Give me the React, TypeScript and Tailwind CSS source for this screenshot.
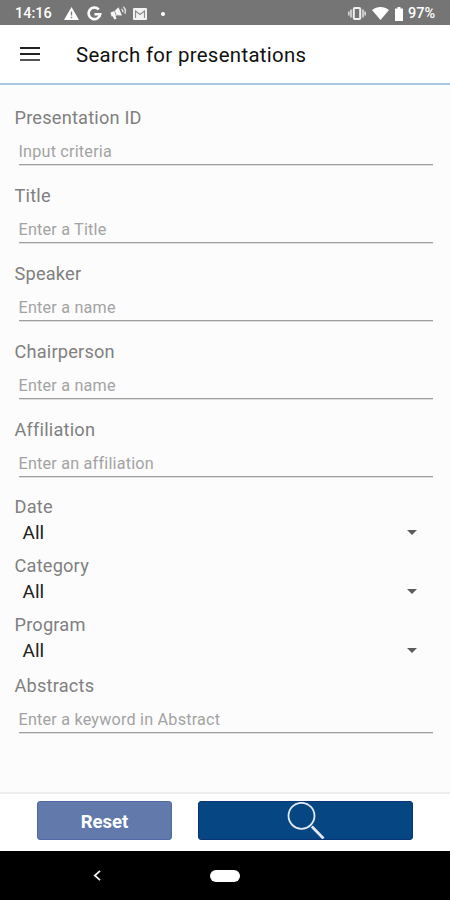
import { FC, useState } from 'react'

interface TextFieldProps {
  label: string
  placeholder: string
}

interface SelectFieldProps {
  label: string
  value: string
}

const textFields: TextFieldProps[] = [
  { label: 'Presentation ID', placeholder: 'Input criteria' },
  { label: 'Title', placeholder: 'Enter a Title' },
  { label: 'Speaker', placeholder: 'Enter a name' },
  { label: 'Chairperson', placeholder: 'Enter a name' },
  { label: 'Affiliation', placeholder: 'Enter an affiliation' },
]

const selectFields: SelectFieldProps[] = [
  { label: 'Date', value: 'All' },
  { label: 'Category', value: 'All' },
  { label: 'Program', value: 'All' },
]

const StatusBar: FC = () => (
  <div className="flex h-[25px] shrink-0 items-center bg-[#757575] pt-[2px] pr-[14px] pl-[15px] text-[14.5px] font-medium text-white">
    <span className="w-[49px]">14:16</span>
    <svg className="h-[13px] w-[15px]" viewBox="0 0 15 13">
      <path d="M7.5 0 15 13H0z" fill="#fff" />
      <path d="M7.5 4.5v4M7.5 9.7v1.5" stroke="#858585" strokeWidth="1.4" />
    </svg>
    <svg className="ml-2 h-[15px] w-[15px]" viewBox="0 0 15 15" fill="none" stroke="#fff" strokeWidth="2.6">
      <path d="M11.8 3.5A5.8 5.8 0 1 0 13.2 8.2H7.5" />
    </svg>
    <svg className="ml-2 h-[15px] w-[17px]" viewBox="0 0 17 15">
      <path d="M.5 6.5 4.5 5 8.5 1.2 12 9.5 7 9.2 5.5 9.8l1 3-2.2.8-1.6-3.3-1.2.2z" fill="#f5f5f5" />
      <path d="M11.5 3c1 .7 1.5 2 1.2 3.2M13.3.8c1.9 1.7 2.6 4.4 1.5 7" fill="none" stroke="#ddd" strokeWidth="1.5" />
      <path d="M4.7 5.2 6 9" stroke="#858585" strokeWidth=".8" />
    </svg>
    <svg className="ml-[6px] h-[12px] w-[14px]" viewBox="0 0 14 12">
      <rect width="14" height="12" rx="1.2" fill="#f3f3f3" />
      <path d="M2.5 10V3L7 6.5 11.5 3v7" fill="none" stroke="#8d8d8d" strokeWidth="1.2" />
    </svg>
    <span className="ml-[14px] h-1 w-1 rounded-full bg-white" />
    <div className="flex-1" />
    <svg className="h-[13px] w-[18px]" viewBox="0 0 18 13">
      <path d="M.8 4.5v4M3 2.5v8M17.2 4.5v4M15 2.5v8" stroke="#d8d8d8" strokeWidth="1.7" />
      <rect x="5.8" y="1" width="6.4" height="11" rx="1" fill="#757575" stroke="#f0f0f0" strokeWidth="2" />
    </svg>
    <svg className="ml-[6px] h-[13px] w-[17px]" viewBox="0 0 17 13">
      <path d="M0 3C5-1 12-1 17 3L8.5 13z" fill="#fff" />
    </svg>
    <svg className="ml-[6px] h-[14px] w-[8px]" viewBox="0 0 8 14">
      <path d="M2.5 0h3v1.5H8V14H0V1.5h2.5z" fill="#fff" />
    </svg>
    <span className="ml-[5px] w-[28px] whitespace-nowrap text-[14.5px]">97%</span>
  </div>
)

const TextField: FC<TextFieldProps> = ({ label, placeholder }) => (
  <label className="block">
    <span className="block h-6 pt-px text-[18.2px] leading-6 tracking-[0.2px] text-[#808080]">{label}</span>
    <span className="block pr-[2px] pl-1">
      <input
        className="block h-9 w-full border-b border-[#a0a0a0] bg-transparent pt-[10px] text-[16.2px] tracking-[0.2px] shadow-[0_1px_0_#dedede] outline-none placeholder:text-[#a3a3a3]"
        placeholder={placeholder}
      />
    </span>
  </label>
)

const SelectField: FC<SelectFieldProps> = ({ label, value }) => (
  <div className="h-[59.2px]">
    <div className="h-6 text-[18.2px] leading-6 tracking-[0.2px] text-[#808080]">{label}</div>
    <button className="flex h-[26px] w-full items-center justify-between pr-[18px] pl-2 text-[19px] text-[#222]">
      <span className="pt-[2px]">{value}</span>
      <svg className="h-[5px] w-[10px]" viewBox="0 0 10 5">
        <path d="M0 0h10L5 5z" fill="#5c5c5c" />
      </svg>
    </button>
  </div>
)

const App: FC = () => {
  const [formKey, setFormKey] = useState(0)

  return (
    <div className="flex h-[900px] w-[450px] flex-col overflow-hidden bg-[#fcfcfc] font-['Roboto',sans-serif]">
      <StatusBar />

      <header className="flex h-[60px] shrink-0 items-center border-b-2 border-[#a9c6dc] bg-white pl-5">
        <svg className="h-[14px] w-5" viewBox="0 0 20 14" stroke="#222" strokeWidth="2">
          <path d="M0 1h20M0 7h20" />
          <path d="M0 13h20" stroke="#555" />
        </svg>
        <h1 className="ml-9 pt-[3px] text-[20.4px] tracking-[0.32px] text-[#111]">Search for presentations</h1>
      </header>

      <main key={formKey} className="flex-1 pt-5 pr-[15px] pl-[14.5px]">
        <div className="flex flex-col gap-[18px]">
          {textFields.map((field) => (
            <TextField key={field.label} {...field} />
          ))}
        </div>
        <div className="mt-[18px]">
          {selectFields.map((field) => (
            <SelectField key={field.label} {...field} />
          ))}
        </div>
        <TextField label="Abstracts" placeholder="Enter a keyword in Abstract" />
      </main>

      <footer className="flex h-[59px] shrink-0 border-t-2 border-[#ededed] bg-white pt-[7px] pl-[37px]">
        <button
          className="h-[39px] w-[135px] rounded-[3px] border border-[#5069a5] bg-[#6179ab] pt-[4px] text-[18.5px] font-bold text-white"
          onClick={() => setFormKey(formKey + 1)}
        >
          Reset
        </button>
        <button
          aria-label="Search"
          className="ml-[26px] flex h-[39px] w-[215px] justify-center rounded-[3px] border border-[#0a3478] bg-[#054683]"
        >
          <svg className="h-[37px] w-[38px]" viewBox="0 0 38 37" fill="none" stroke="#e4e8f4">
            <circle cx="14.5" cy="13.8" r="13" strokeWidth="1.8" />
            <path d="M24.8 24.5 36.5 36.5" strokeWidth="2.8" />
          </svg>
        </button>
      </footer>

      <nav className="flex h-[49px] shrink-0 items-center bg-black pl-[93px]">
        <svg className="h-[11px] w-[8px]" viewBox="0 0 8 11" fill="none" stroke="#eee" strokeWidth="1.8">
          <path d="M7 .8 1.8 5.5 7 10.2" />
        </svg>
        <div className="ml-[109px] h-[12px] w-[30px] rounded-full bg-white" />
      </nav>
    </div>
  )
}

export default App
